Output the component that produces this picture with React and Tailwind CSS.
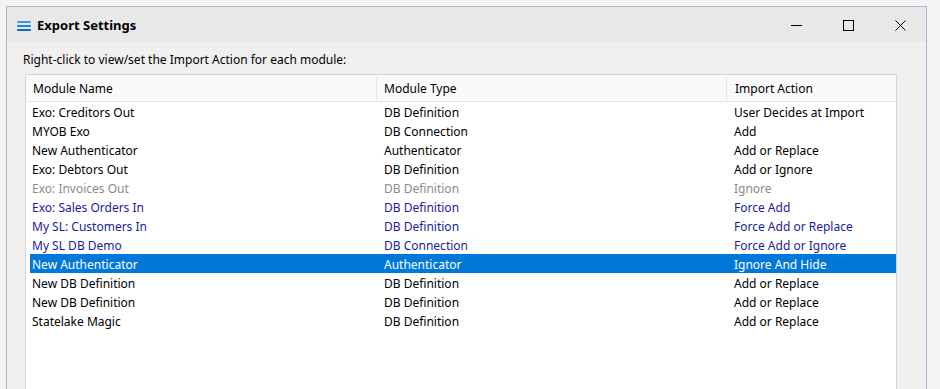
import React from "react";

const rows = [
  { name: "Exo: Creditors Out", type: "DB Definition", action: "User Decides at Import", tone: "normal" },
  { name: "MYOB Exo", type: "DB Connection", action: "Add", tone: "normal" },
  { name: "New Authenticator", type: "Authenticator", action: "Add or Replace", tone: "normal" },
  { name: "Exo: Debtors Out", type: "DB Definition", action: "Add or Ignore", tone: "normal" },
  { name: "Exo: Invoices Out", type: "DB Definition", action: "Ignore", tone: "muted" },
  { name: "Exo: Sales Orders In", type: "DB Definition", action: "Force Add", tone: "force" },
  { name: "My SL: Customers In", type: "DB Definition", action: "Force Add or Replace", tone: "force" },
  { name: "My SL DB Demo", type: "DB Connection", action: "Force Add or Ignore", tone: "force" },
  { name: "New Authenticator", type: "Authenticator", action: "Ignore And Hide", tone: "selected" },
  { name: "New DB Definition", type: "DB Definition", action: "Add or Replace", tone: "normal" },
  { name: "New DB Definition", type: "DB Definition", action: "Add or Replace", tone: "normal" },
  { name: "Statelake Magic", type: "DB Definition", action: "Add or Replace", tone: "normal" },
];

const toneClass = {
  normal: "text-black",
  muted: "text-[#8a8a8a]",
  force: "text-[#1c1c96]",
  selected: "bg-[#0078d7] text-white",
};

const App = () => {
  return (
    <div className="w-[940px] h-[389px] overflow-hidden bg-[#f3f3f3] pt-[6px] pl-[6px] font-['Noto_Sans',sans-serif] text-[12px]">
      <div className="w-[921px] h-[400px] border border-[#a7b8d0] bg-[#f0f0f0] flex flex-col">
        <div className="h-[35px] pt-[2px] bg-[#e8e8e8] flex items-center shrink-0">
          <svg className="ml-[10px]" width="14" height="10" viewBox="0 0 14 10">
            <rect x="0" y="0" width="14" height="2" rx="1" fill="#3a9be6" />
            <rect x="0" y="4" width="14" height="2" rx="1" fill="#1f85d6" />
            <rect x="0" y="8" width="14" height="2" rx="1" fill="#0f6cbd" />
          </svg>
          <span className="ml-[6px] font-bold text-[13px] text-black">Export Settings</span>
          <div className="ml-auto flex items-center">
            <div className="w-[52px] h-[33px] flex items-center justify-center">
              <div className="w-[11px] h-px bg-black" />
            </div>
            <div className="w-[52px] h-[33px] flex items-center justify-center">
              <div className="w-[11px] h-[11px] border border-black" />
            </div>
            <div className="w-[52px] h-[33px] flex items-center justify-center">
              <svg width="11" height="11" viewBox="0 0 11 11">
                <path d="M0.5 0.5 L10.5 10.5 M10.5 0.5 L0.5 10.5" stroke="black" strokeWidth="1" />
              </svg>
            </div>
          </div>
        </div>

        <div className="pl-[16px] pt-[10px] text-black leading-[16px]">
          Right-click to view/set the Import Action for each module:
        </div>

        <div className="ml-[18px] mt-[6px] w-[872px] flex-1 border border-[#d4d4d4] bg-white">
          <div className="h-[27px] pt-[2px] flex border-b border-[#e5e5e5] bg-[#fafafa] text-black">
            <div className="w-[351px] pl-[7px] flex items-center border-r border-[#e5e5e5]">Module Name</div>
            <div className="w-[350px] pl-[7px] flex items-center border-r border-[#e5e5e5]">Module Type</div>
            <div className="flex-1 pl-[8px] flex items-center">Import Action</div>
          </div>
          <div className="pl-[4px]">
            {rows.map((r, i) => (
              <div key={i} className={`h-[19px] pt-[2px] flex items-center ${toneClass[r.tone]}`}>
                <div className="w-[354px] pl-[2px] whitespace-nowrap">{r.name}</div>
                <div className="w-[350px] whitespace-nowrap">{r.type}</div>
                <div className="flex-1 whitespace-nowrap">{r.action}</div>
              </div>
            ))}
          </div>
        </div>
      </div>
    </div>
  );
};

export default App;
